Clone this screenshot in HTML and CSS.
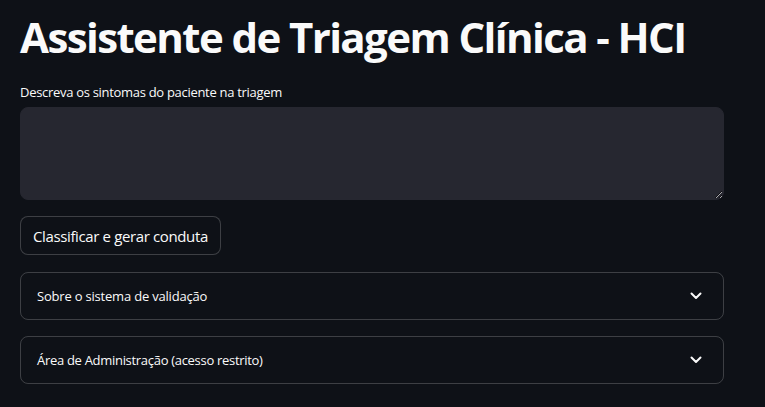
FILE: index.html
```html
<!DOCTYPE html>
<html lang="pt">
<head>
<meta charset="utf-8">
<link rel="stylesheet" href="styles.css">
</head>
<body>
<main class="page">
  <h1 class="title">Assistente de Triagem Clínica - HCI</h1>
  <label class="label" for="sintomas">Descreva os sintomas do paciente na triagem</label>
  <textarea id="sintomas" class="textarea"></textarea>
  <button class="btn" type="button">Classificar e gerar conduta</button>
  <div class="expander first">
    <span class="exp-title">Sobre o sistema de validação</span>
    <svg class="chev" width="12" height="8" viewBox="0 0 12 8"><path d="M1.5 1.5 L6 6 L10.5 1.5" fill="none" stroke="#fafafa" stroke-width="2" stroke-linecap="round" stroke-linejoin="round"/></svg>
  </div>
  <div class="expander">
    <span class="exp-title wide">Área de Administração (acesso restrito)</span>
    <svg class="chev" width="12" height="8" viewBox="0 0 12 8"><path d="M1.5 1.5 L6 6 L10.5 1.5" fill="none" stroke="#fafafa" stroke-width="2" stroke-linecap="round" stroke-linejoin="round"/></svg>
  </div>
</main>
</body>
</html>
```
FILE: styles.css
```css
html, body {
  margin: 0;
  padding: 0;
  background: #0e1117;
  color: #fafafa;
  font-family: "Open Sans", "Noto Sans", sans-serif;
}
.page {
  width: 704px;
  margin-left: 20px;
  padding-top: 10px;
  display: flex;
  flex-direction: column;
  align-items: flex-start;
}
.title {
  margin: 0;
  font-size: 42px;
  font-weight: 700;
  line-height: 54px;
  letter-spacing: -1.6px;
}
.label {
  margin-top: 18px;
  font-size: 13px;
  line-height: 20px;
  margin-bottom: 5px;
  letter-spacing: -0.3px;
}
.textarea {
  box-sizing: border-box;
  width: 704px;
  height: 93px;
  background: #262730;
  border: 1px solid #262730;
  border-radius: 8px;
  color: #fafafa;
  resize: vertical;
  margin: 0;
}
.btn {
  margin-top: 16px;
  box-sizing: border-box;
  height: 39px;
  padding: 0 12px;
  background: #0e1117;
  color: #fafafa;
  border: 1px solid rgba(250,250,250,0.2);
  border-radius: 8px;
  font-family: inherit;
  font-size: 15px;
  letter-spacing: -0.37px;
}
.expander {
  margin-top: 16px;
  box-sizing: border-box;
  width: 704px;
  height: 48px;
  border: 1px solid rgba(250,250,250,0.2);
  border-radius: 8px;
  display: flex;
  align-items: center;
  justify-content: space-between;
  padding: 0 21px 0 16px;
  font-size: 13px;
}
.expander.first {
  margin-top: 17px;
}
.exp-title {
  letter-spacing: -0.2px;
}
.exp-title.wide {
  letter-spacing: -0.3px;
}
.chev {
  display: block;
}
```
